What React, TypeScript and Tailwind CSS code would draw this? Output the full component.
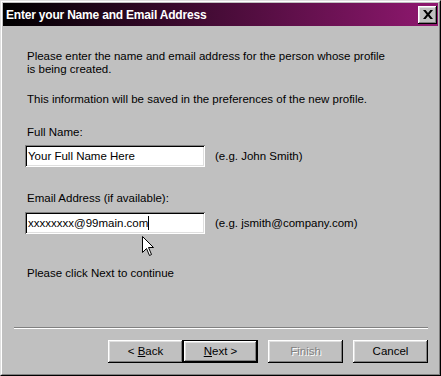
import React from "react";

const font = { fontFamily: '"Liberation Sans", Arial, sans-serif' };

function Btn({ children, def, disabled }: { children: React.ReactNode; def?: boolean; disabled?: boolean }) {
  const bevel =
    "shadow-[inset_-1px_-1px_0_#000,inset_1px_1px_0_#fff,inset_-2px_-2px_0_#808080,inset_2px_2px_0_#dfdfdf]";
  if (def) {
    return (
      <div className="w-[75px] h-[23px] border border-black">
        <div className={`w-full h-full flex items-center justify-center text-[11.5px] text-black ${bevel}`}>
          <span className="whitespace-pre">{children}</span>
        </div>
      </div>
    );
  }
  return (
    <div
      className={`w-[75px] h-[23px] flex items-center justify-center text-[11.5px] ${bevel} ${
        disabled ? "text-[#808080] [text-shadow:1px_1px_0_#fff]" : "text-black"
      }`}
    >
      <span className="whitespace-pre">{children}</span>
    </div>
  );
}

function Field({ value, caret }: { value: string; caret?: boolean }) {
  return (
    <div className="w-[180px] h-[22px] bg-white flex items-center pl-[3px] text-[11.5px] text-black shadow-[inset_1px_1px_0_#808080,inset_-1px_-1px_0_#fff,inset_2px_2px_0_#000,inset_-2px_-2px_0_#dfdfdf]">
      <span className="leading-[13px]">{value}</span>
      {caret && <span className="w-px h-[14px] bg-black" />}
    </div>
  );
}

export default function App() {
  return (
    <div style={font} className="w-[441px] h-[376px] bg-[#c0c0c0] relative select-none">
      <div className="w-full h-full border border-t-[#dfdfdf] border-l-[#dfdfdf] border-b-black border-r-black">
        <div className="w-full h-full border border-t-white border-l-white border-b-[#808080] border-r-[#808080] p-px flex flex-col">
          {/* title bar */}
          <div className="h-[23px] flex items-center justify-between pl-[3px] pr-[1px] bg-[linear-gradient(to_right,#000000,#901870)]">
            <span className="text-white font-bold text-[12px] tracking-[-0.2px] leading-none">Enter your Name and Email Address</span>
            <div className="w-[19px] h-[18px] bg-[#c0c0c0] flex items-center justify-center shadow-[inset_-1px_-1px_0_#000,inset_1px_1px_0_#fff,inset_-2px_-2px_0_#808080,inset_2px_2px_0_#dfdfdf]">
              <svg width="10" height="9" viewBox="0 0 10 9" className="mb-px">
                <path d="M0 0h2.6l2.4 2.9 2.4-2.9H10L6.4 4.5 10 9H7.4L5 6.1 2.6 9H0l3.6-4.5z" fill="#000" />
              </svg>
            </div>
          </div>

          {/* content */}
          <div className="flex flex-col text-[11.5px] leading-[13px] text-black">
            <div className="mt-[24px] pl-[24px]">
              <p>Please enter the name and email address for the person whose profile</p>
              <p>is being created.</p>
            </div>
            <p className="mt-[17px] pl-[24px]">This information will be saved in the preferences of the new profile.</p>

            <p className="mt-[20px] pl-[24px]">Full Name:</p>
            <div className="mt-[6px] pl-[22px] flex items-center gap-[10px]">
              <Field value="Your Full Name Here" />
              <span>(e.g. John Smith)</span>
            </div>

            <p className="mt-[25px] pl-[24px]">Email Address (if available):</p>
            <div className="mt-[7px] pl-[22px] flex items-center gap-[10px]">
              <Field value="xxxxxxxx@99main.com" caret />
              <span>(e.g. jsmith@company.com)</span>
            </div>

            <p className="mt-[33px] pl-[24px]">Please click Next to continue</p>

            <div className="mt-[47px] ml-[11px] w-[414px] h-[2px] border-t border-t-[#808080] border-b border-b-white" />

            <div className="mt-[11px] flex pl-[105px]">
              <Btn>
                {"< "}
                <span className="underline">B</span>
                {"ack"}
              </Btn>
              <Btn def>
                <span className="underline">N</span>
                {"ext >"}
              </Btn>
              <div className="w-[10px]" />
              <Btn disabled>Finish</Btn>
              <div className="w-[10px]" />
              <Btn>Cancel</Btn>
            </div>
          </div>
        </div>
      </div>

      {/* mouse pointer */}
      <svg className="absolute left-[142px] top-[236px]" width="12" height="20" viewBox="0 0 12 20">
        <path d="M0.5 0.5V16.5L4.5 12.5L7.5 19.5L9.5 18.5L6.5 11.5H11.5Z" fill="#fff" stroke="#000" strokeWidth="1" />
      </svg>
    </div>
  );
}
